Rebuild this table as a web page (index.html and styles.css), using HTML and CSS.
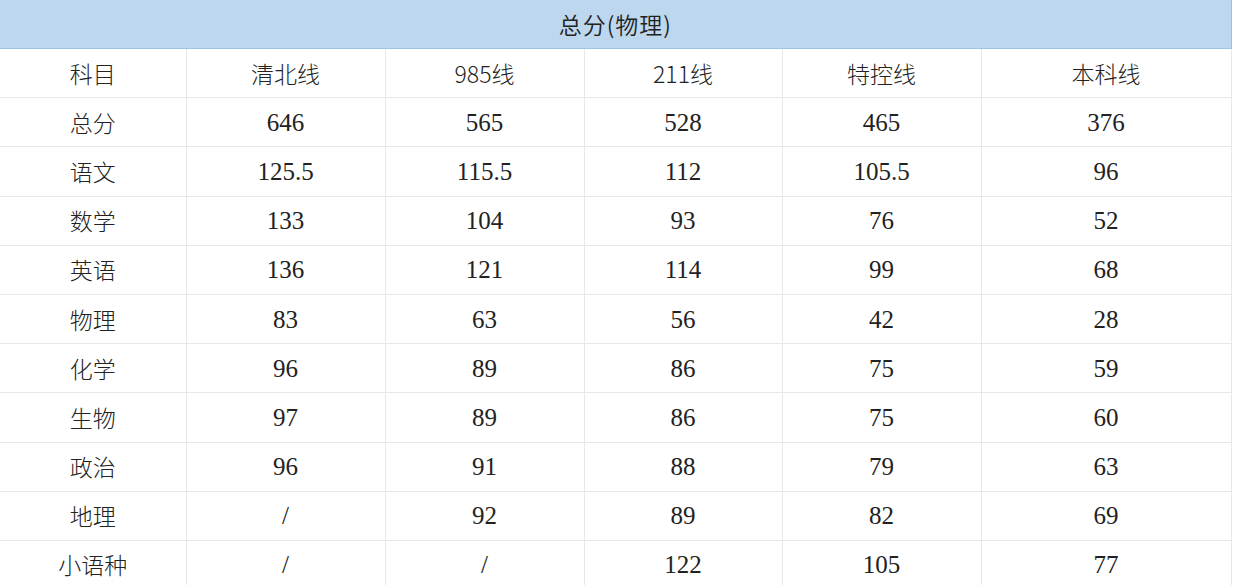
FILE: index.html
```html
<!DOCTYPE html>
<html lang="zh">
<head>
<meta charset="utf-8">
<title>总分(物理)</title>
<link rel="stylesheet" href="styles.css">
</head>
<body>
<table class="score">
  <colgroup>
    <col class="c0"><col class="c1"><col class="c2"><col class="c3"><col class="c4"><col class="c5">
  </colgroup>
  <thead>
    <tr><th class="title" colspan="6">总分(物理)</th></tr>
  </thead>
  <tbody>
    <tr class="head"><td class="cn">科目</td><td class="cn">清北线</td><td class="cn">985线</td><td class="cn">211线</td><td class="cn">特控线</td><td class="cn">本科线</td></tr>
    <tr><td class="cn">总分</td><td>646</td><td>565</td><td>528</td><td>465</td><td>376</td></tr>
    <tr><td class="cn">语文</td><td>125.5</td><td>115.5</td><td>112</td><td>105.5</td><td>96</td></tr>
    <tr><td class="cn">数学</td><td>133</td><td>104</td><td>93</td><td>76</td><td>52</td></tr>
    <tr><td class="cn">英语</td><td>136</td><td>121</td><td>114</td><td>99</td><td>68</td></tr>
    <tr><td class="cn">物理</td><td>83</td><td>63</td><td>56</td><td>42</td><td>28</td></tr>
    <tr><td class="cn">化学</td><td>96</td><td>89</td><td>86</td><td>75</td><td>59</td></tr>
    <tr><td class="cn">生物</td><td>97</td><td>89</td><td>86</td><td>75</td><td>60</td></tr>
    <tr><td class="cn">政治</td><td>96</td><td>91</td><td>88</td><td>79</td><td>63</td></tr>
    <tr><td class="cn">地理</td><td>/</td><td>92</td><td>89</td><td>82</td><td>69</td></tr>
    <tr><td class="cn">小语种</td><td>/</td><td>/</td><td>122</td><td>105</td><td>77</td></tr>
  </tbody>
</table>
</body>
</html>
```
FILE: styles.css
```css
html, body {
  margin: 0;
  padding: 0;
  background: #ffffff;
}
body {
  overflow: hidden;
}
.score {
  width: 1231px;
  border-collapse: collapse;
  table-layout: fixed;
  color: #222222;
  font-family: "Liberation Serif", "Noto Sans CJK SC", serif;
}
.c0 { width: 186px; }
.c1 { width: 199px; }
.c2 { width: 199px; }
.c3 { width: 198px; }
.c4 { width: 199px; }
.c5 { width: 250px; }
.title {
  height: 48px;
  padding: 0;
  background: #bdd7ee;
  border-bottom: 1px solid #9cc2e5;
  border-right: 1px solid #9cc2e5;
  font-family: "Noto Sans CJK SC", sans-serif;
  font-weight: 350;
  font-size: 23px;
  letter-spacing: 1px;
  color: #222222;
  text-align: center;
  vertical-align: middle;
}
.score td {
  height: 48.2px;
  padding: 0;
  text-align: center;
  vertical-align: middle;
  border-bottom: 1px solid #e8e8e8;
  border-right: 1px solid #e8e8e8;
  font-size: 25px;
  line-height: 1;
}
.score td.cn {
  font-family: "Noto Sans CJK SC", sans-serif;
  font-size: 23px;
  font-weight: 300;
}
```
